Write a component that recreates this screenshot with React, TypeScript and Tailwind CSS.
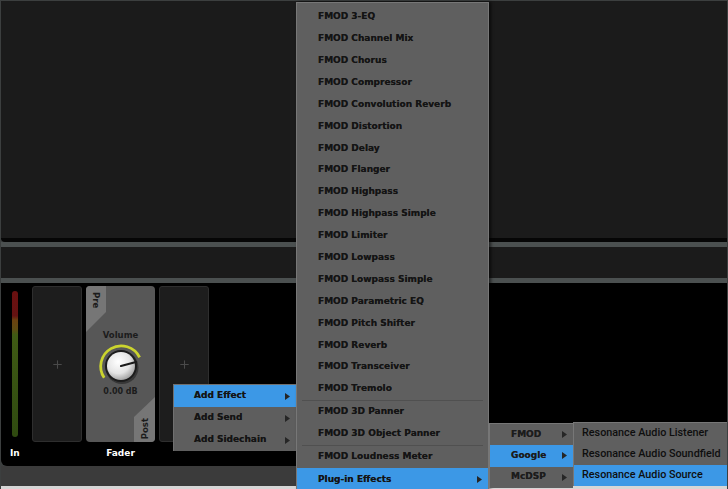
import React from 'react';
import { Plus } from 'lucide-react';

const menuFont = "font-['DejaVu_Sans',sans-serif]";

const Arrow: React.FC = () => (
  <svg width="5" height="7" viewBox="0 0 5 7" className="ml-auto shrink-0">
    <path d="M0 0 L5 3.5 L0 7 Z" fill="#262626" />
  </svg>
);

type ItemProps = { label: string; active?: boolean; arrow?: boolean; h: string; pl: string };

const MenuItem: React.FC<ItemProps> = ({ label, active, arrow, h, pl }) => (
  <div className={`flex items-center pr-[6px] ${h} ${pl} ${active ? 'bg-[#3c98e6]' : ''}`}>
    <span className="whitespace-nowrap">{label}</span>
    {arrow && <Arrow />}
  </div>
);

const effectsA = [
  'FMOD 3-EQ',
  'FMOD Channel Mix',
  'FMOD Chorus',
  'FMOD Compressor',
  'FMOD Convolution Reverb',
  'FMOD Distortion',
  'FMOD Delay',
  'FMOD Flanger',
  'FMOD Highpass',
  'FMOD Highpass Simple',
  'FMOD Limiter',
  'FMOD Lowpass',
  'FMOD Lowpass Simple',
  'FMOD Parametric EQ',
  'FMOD Pitch Shifter',
  'FMOD Reverb',
  'FMOD Transceiver',
  'FMOD Tremolo',
];

const Separator: React.FC = () => <div className="mx-[5px] h-[1px] bg-[#505050]" />;

const EmptySlot: React.FC = () => (
  <div className="flex h-[156px] w-[50px] items-center justify-center rounded-[3px] border border-[#2e2e2e] bg-[#1d1d1d]">
    <Plus size={13} strokeWidth={2} color="#4a4a4a" />
  </div>
);

const Knob: React.FC = () => (
  <svg width="44" height="44" viewBox="0 0 44 44" className="overflow-visible">
    <defs>
      <radialGradient id="knobFace" cx="40%" cy="35%" r="70%">
        <stop offset="0%" stopColor="#ffffff" />
        <stop offset="60%" stopColor="#e4e4e4" />
        <stop offset="100%" stopColor="#9c9c9c" />
      </radialGradient>
    </defs>
    <path d="M5.2 33.8 A20.5 20.5 0 1 1 40.6 13.3" fill="none" stroke="#cbd42e" strokeWidth="2.8" />
    <circle cx="23" cy="23.5" r="16.5" fill="#2a2a2a" opacity="0.7" />
    <circle cx="22" cy="22" r="16" fill="#1c1c1c" />
    <circle cx="22" cy="22" r="14" fill="url(#knobFace)" />
    <line x1="22" y1="22" x2="37" y2="18" stroke="#1a1a1a" strokeWidth="2.2" strokeLinecap="round" />
  </svg>
);

const Fader: React.FC = () => (
  <div className="relative flex h-[156px] w-[69px] flex-col items-center overflow-hidden rounded-[4px] bg-[#575757] pt-[43px] text-[#1c1c1c]">
    <div className="absolute left-0 top-0 flex h-[46px] w-[20px] justify-center bg-[#767676] pt-[6px] [clip-path:polygon(0_0,100%_0,100%_26px,0_100%)]">
      <span className="text-[8.5px] leading-[8px] [writing-mode:vertical-rl]">Pre</span>
    </div>
    <div className="absolute bottom-0 right-0 flex h-[45px] w-[21px] items-end justify-center bg-[#767676] pb-[3px] [clip-path:polygon(0_20px,100%_0,100%_100%,0_100%)]">
      <span className="rotate-180 text-[8.5px] leading-[8px] [writing-mode:vertical-rl]">Post</span>
    </div>
    <div className="h-[12px] text-[8.5px] leading-[12px]">Volume</div>
    <div className="mt-[3px]">
      <Knob />
    </div>
    <div className="-mt-[2px] h-[12px] text-[8px] leading-[12px]">0.00 dB</div>
  </div>
);

const App: React.FC = () => {
  return (
    <div className={`relative flex h-[489px] w-full flex-col overflow-hidden bg-[#3c3f3f] px-[1px] ${menuFont}`}>
      {/* timeline area */}
      <div className="mt-[1px] h-[241px] shrink-0 rounded-bl-[4px] border-b-[4px] border-[#060606] bg-[#1b1b1b]" />
      <div className="h-[5px] shrink-0 bg-[#4b5050]" />
      <div className="h-[31px] shrink-0 bg-[#1b1b1b]" />
      <div className="h-[5px] shrink-0 bg-[#4b5050]" />

      {/* mixer strip */}
      <div className="flex h-[183px] shrink-0 gap-[4px] rounded-b-[6px] bg-black pl-[9px] pt-[3px] text-[9px] font-bold text-white">
        <div className="flex w-[18px] flex-col">
          <div className="h-[156px] pl-[2px] pt-[5px]">
            <div className="h-[146px] w-[6px] rounded-[3px] bg-[linear-gradient(to_bottom,#6a1010_0%,#641212_17%,#6a4110_20%,#5e4a12_26%,#3f5a14_30%,#2f4a10_100%)]" />
          </div>
          <div className="h-[22px] leading-[22px]">In</div>
        </div>
        <div className="flex flex-col">
          <EmptySlot />
        </div>
        <div className="flex flex-col items-center">
          <Fader />
          <div className="h-[22px] leading-[22px]">Fader</div>
        </div>
        <div className="flex flex-col">
          <EmptySlot />
        </div>
      </div>
      <div className="h-[20px] shrink-0 bg-[#3b3b3b]" />
      <div className="flex-1 bg-[#d6d6d6]" />

      {/* context menu */}
      <div className="absolute left-[173px] top-[384px] w-[123px] border-l border-t border-[#707070] bg-[#5e5e5e] text-[9px] font-bold text-[#141414] shadow-[2px_2px_3px_rgba(0,0,0,0.5)] [text-shadow:0_0_0.6px_rgba(20,20,20,0.8)]">
        <MenuItem label="Add Effect" active arrow h="h-[22px]" pl="pl-[20px]" />
        <MenuItem label="Add Send" arrow h="h-[22px]" pl="pl-[20px]" />
        <MenuItem label="Add Sidechain" arrow h="h-[22px]" pl="pl-[20px]" />
      </div>

      {/* effects menu */}
      <div className="absolute left-[296px] top-[2px] h-[487px] w-[193px] overflow-hidden border-x border-t border-[#777777] bg-[#5f5f5f] pt-[3px] text-[9px] font-bold text-[#141414] shadow-[2px_0_3px_rgba(0,0,0,0.6)] [text-shadow:0_0_0.6px_rgba(20,20,20,0.8)]">
        {effectsA.map((e) => (
          <MenuItem key={e} label={e} h="h-[21.9px]" pl="pl-[21px]" />
        ))}
        <Separator />
        <MenuItem label="FMOD 3D Panner" h="h-[21.9px]" pl="pl-[21px]" />
        <MenuItem label="FMOD 3D Object Panner" h="h-[21.9px]" pl="pl-[21px]" />
        <Separator />
        <MenuItem label="FMOD Loudness Meter" h="h-[21.9px]" pl="pl-[21px]" />
        <MenuItem label="Plug-in Effects" active arrow h="h-[24px]" pl="pl-[21px]" />
      </div>

      {/* vendor submenu */}
      <div className="absolute left-[489px] top-[423px] w-[84px] border-l border-t border-[#777777] bg-[#5f5f5f] text-[9px] font-bold text-[#1c1c1c] [text-shadow:0_0_0.6px_rgba(20,20,20,0.8)]">
        <MenuItem label="FMOD" arrow h="h-[21.3px]" pl="pl-[21px]" />
        <MenuItem label="Google" active arrow h="h-[21.3px]" pl="pl-[21px]" />
        <MenuItem label="McDSP" arrow h="h-[21.3px]" pl="pl-[21px]" />
      </div>

      {/* google submenu */}
      <div className="absolute left-[573px] top-[422px] w-[154px] border-l border-t border-[#777777] bg-[#5f5f5f] font-['Roboto',sans-serif] text-[10.8px] font-medium text-[#0e0e0e]">
        <MenuItem label="Resonance Audio Listener" h="h-[21px]" pl="pl-[8px]" />
        <MenuItem label="Resonance Audio Soundfield" h="h-[21px]" pl="pl-[8px]" />
        <MenuItem label="Resonance Audio Source" active h="h-[21px]" pl="pl-[8px]" />
      </div>
    </div>
  );
};

export default App;
